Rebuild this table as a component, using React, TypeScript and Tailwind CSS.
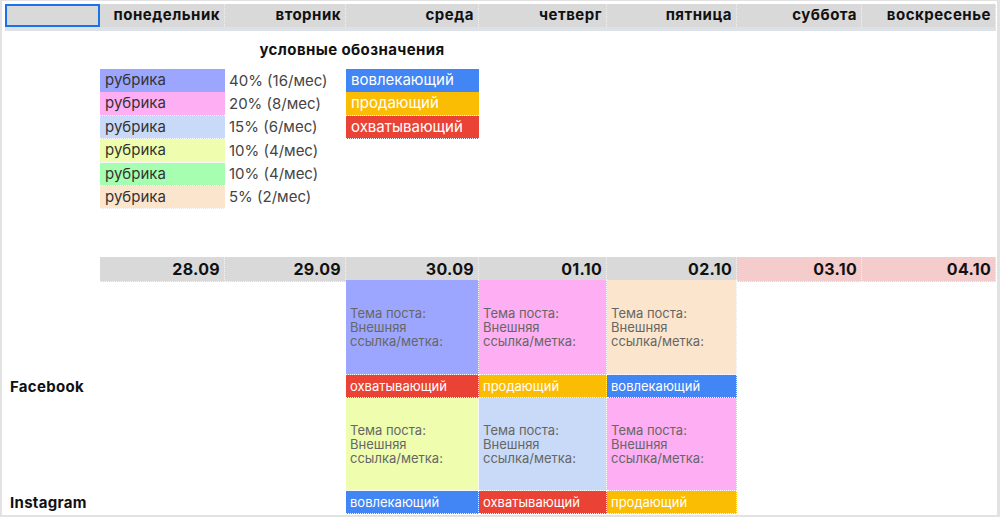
import React from 'react'

// Content plan layout (spreadsheet look)
const COLS = 'grid grid-cols-[95px_125px_121px_133px_128px_130px_125px_134px]'

const days = ['понедельник', 'вторник', 'среда', 'четверг', 'пятница', 'суббота', 'воскресенье']

const rubrics = [
  { bg: 'bg-[#9ca6fe]', share: '40% (16/мес)' },
  { bg: 'bg-[#feaef3]', share: '20% (8/мес)' },
  { bg: 'bg-[#c9daf8]', share: '15% (6/мес)' },
  { bg: 'bg-[#eefeae]', share: '10% (4/мес)' },
  { bg: 'bg-[#a6ffb0]', share: '10% (4/мес)' },
  { bg: 'bg-[#fce5cd]', share: '5% (2/мес)' },
]

const kinds = [
  { bg: 'bg-[#4285f4]', label: 'вовлекающий' },
  { bg: 'bg-[#fbbc04]', label: 'продающий' },
  { bg: 'bg-[#ea4335]', label: 'охватывающий' },
]

const dates = [
  { d: '28.09', bg: 'bg-[#d9d9d9]' },
  { d: '29.09', bg: 'bg-[#d9d9d9]' },
  { d: '30.09', bg: 'bg-[#d9d9d9]' },
  { d: '01.10', bg: 'bg-[#d9d9d9]' },
  { d: '02.10', bg: 'bg-[#d9d9d9]' },
  { d: '03.10', bg: 'bg-[#f4cccc]' },
  { d: '04.10', bg: 'bg-[#f4cccc]' },
]

type Post = { bg: string; tagBg: string; tag: string }

const facebook: Post[] = [
  { bg: 'bg-[#9ca6fe]', tagBg: 'bg-[#ea4335]', tag: 'охватывающий' },
  { bg: 'bg-[#feaef3]', tagBg: 'bg-[#fbbc04]', tag: 'продающий' },
  { bg: 'bg-[#fce5cd]', tagBg: 'bg-[#4285f4]', tag: 'вовлекающий' },
]

const instagram: Post[] = [
  { bg: 'bg-[#eefeae]', tagBg: 'bg-[#4285f4]', tag: 'вовлекающий' },
  { bg: 'bg-[#c9daf8]', tagBg: 'bg-[#ea4335]', tag: 'охватывающий' },
  { bg: 'bg-[#feaef3]', tagBg: 'bg-[#fbbc04]', tag: 'продающий' },
]

function PostCell({ bg }: { bg: string }) {
  return (
    <div className={`${bg} flex flex-col justify-center border-r border-b border-dotted border-white pl-[4px] text-[13px] leading-[14px] text-[#666]`}>
      <span>Тема поста:</span>
      <span>Внешняя</span>
      <span>ссылка/метка:</span>
    </div>
  )
}

function PostRows({ name, posts, height }: { name: string; posts: Post[]; height: string }) {
  return (
    <>
      <div className={`${COLS} ${height}`}>
        <div />
        <div />
        <div />
        {posts.map((p, i) => (
          <PostCell key={i} bg={p.bg} />
        ))}
      </div>
      <div className={`${COLS} h-[23px]`}>
        <div className="flex items-center pl-[5px] text-[15px] font-bold tracking-[0.3px] text-[#111]">{name}</div>
        <div />
        <div />
        {posts.map((p, i) => (
          <div
            key={i}
            className={`${p.tagBg} flex items-center border-r border-b border-dotted border-white pl-[4px] text-[13px] text-white`}
          >
            {p.tag}
          </div>
        ))}
      </div>
    </>
  )
}

export default function App() {
  return (
    <div
      className="h-[517px] w-[1000px] overflow-hidden border-t border-r-[3px] border-b-2 border-l-2 border-[#e2e2e2] bg-white pt-[3px] pl-[3px]"
      style={{ fontFamily: 'Inter, "Noto Sans", sans-serif' }}
    >
      {/* day header row */}
      <div className={`${COLS} h-[22px]`}>
        <div className="border-2 border-[#1a73e8] bg-[#d9d9d9]" />
        {days.map((d) => (
          <div
            key={d}
            className="flex items-center justify-end border-r border-dotted border-[#f2f2f2] bg-[#d9d9d9] pr-[4px] text-[15px] font-bold tracking-[0.5px] text-[#111]"
          >
            {d}
          </div>
        ))}
      </div>
      {/* frozen row divider */}
      <div className="h-[5px] w-[991px] bg-[#dde1e8]" />

      {/* legend title */}
      <div className={`${COLS} h-[38px]`}>
        <div />
        <div />
        <div className="col-span-2 pt-[9px] text-center text-[15px] leading-[20px] font-bold tracking-[0.4px] text-[#111]">
          условные обозначения
        </div>
      </div>

      {/* legend rows */}
      {rubrics.map((r, i) => (
        <div key={i} className={`${COLS} h-[23.4px]`}>
          <div />
          <div className={`${r.bg} flex items-center border-b border-dotted border-white pl-[5px] text-[15px] text-[#333]`}>
            рубрика
          </div>
          <div className="flex items-center pl-[4px] text-[15px] text-[#444]">{r.share}</div>
          {kinds[i] ? (
            <div className={`${kinds[i].bg} flex items-center border-b border-dotted border-white pl-[5px] text-[15px] text-white`}>
              {kinds[i].label}
            </div>
          ) : (
            <div />
          )}
        </div>
      ))}

      <div className="h-[48px]" />

      {/* dates */}
      <div className={`${COLS} h-[23px]`}>
        <div />
        {dates.map((d) => (
          <div
            key={d.d}
            className={`${d.bg} flex items-center justify-end border-r border-b border-dotted border-[#f4f4f4] pr-[4px] text-[16px] font-bold tracking-[0.3px] text-[#111]`}
          >
            {d.d}
          </div>
        ))}
      </div>

      <PostRows name="Facebook" posts={facebook} height="h-[95px]" />
      <PostRows name="Instagram" posts={instagram} height="h-[93px]" />
    </div>
  )
}
